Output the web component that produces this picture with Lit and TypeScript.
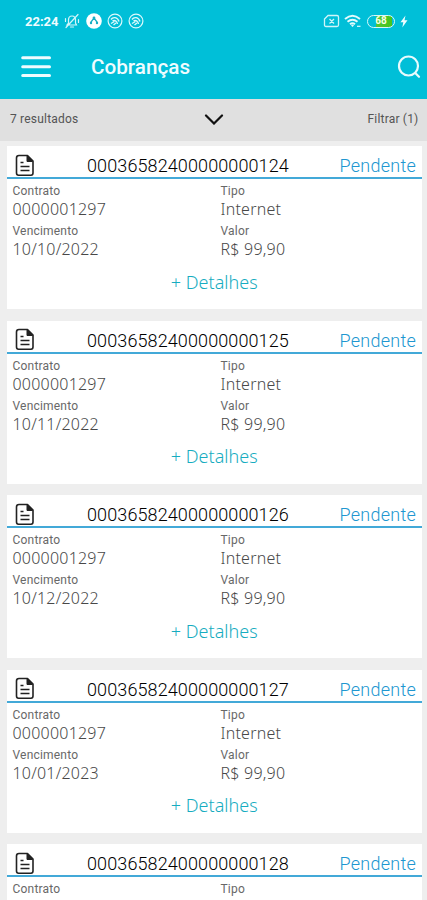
import { LitElement, html, css, svg } from "lit";
import { customElement, property } from "lit/decorators.js";

interface Charge {
  code: string;
  due: string;
}

const charges: Charge[] = [
  { code: "00036582400000000124", due: "10/10/2022" },
  { code: "00036582400000000125", due: "10/11/2022" },
  { code: "00036582400000000126", due: "10/12/2022" },
  { code: "00036582400000000127", due: "10/01/2023" },
  { code: "00036582400000000128", due: "10/02/2023" },
];

const swirl = svg`<circle cx="8" cy="8" r="6.9" stroke-width="1.2"/><path d="M4 6.500C6 3.500 10.500 4 12 8.500M5.500 8C7.500 6.500 10 8 10.500 11M4 10.500L7.500 8.500M6.500 12L9 10" stroke-width="1.400"/>`;

@customElement("charge-card")
export class ChargeCard extends LitElement {
  @property({ attribute: false }) charge!: Charge;

  static styles = css`
    :host {
      display: block;
      flex: none;
      box-sizing: border-box;
      height: 163px;
      background: #fff;
      font-family: Roboto, sans-serif;
      color: #585858;
      white-space: nowrap;
    }
    .head {
      display: grid;
      grid-template-columns: 80.5px 1fr auto;
      align-items: center;
      box-sizing: border-box;
      height: 33px;
      padding: 6px 6px 0 0;
      border-bottom: 2px solid #43a9d8;
      font-size: 18px;
      line-height: 25px;
    }
    .doc {
      display: block;
      width: 20px;
      height: 23px;
      margin-left: 8px;
    }
    .code {
      margin-top: 1px;
      color: #000;
      font-weight: 300;
      letter-spacing: 0.11px;
    }
    .state {
      margin-top: 1px;
      color: #2096d0;
      font-weight: 300;
      letter-spacing: 0.25px;
    }
    .fields {
      display: grid;
      grid-template-columns: 208px 1fr;
      padding: 4px 0 0 6px;
    }
    .field {
      height: 40px;
    }
    .label {
      font-size: 12px;
      line-height: 17px;
      letter-spacing: 0.2px;
      color: #686868;
    }
    .value {
      font-family: "Noto Sans", sans-serif;
      font-weight: 300;
      font-size: 16px;
      line-height: 19px;
      letter-spacing: 0.22px;
      color: #484848;
    }
    .more {
      font-family: "Noto Sans", sans-serif;
      font-weight: 300;
      font-size: 18px;
      line-height: 24px;
      margin-top: 6.500px;
      text-align: center;
      color: #16acc0;
    }
  `;

  render() {
    const c = this.charge;
    const fields = [
      ["Contrato", "0000001297"],
      ["Tipo", "Internet"],
      ["Vencimento", c.due],
      ["Valor", "R$ 99,90"],
    ];
    return html`
      <div class="head">
        <svg class="doc" viewBox="0 0 20 23" fill="none" stroke="#222" stroke-width="1.600" stroke-linejoin="round">
          <path d="M4 1.500H12.500L18 7V19Q18 21.200 16 21.200H3.500Q1.500 21.200 1.500 19V4Q1.500 1.500 4 1.500Z" />
          <path d="M12 2V7.500H17.500Z" fill="#222" stroke-width="1" />
          <path d="M5.500 8.500H8.500M5.500 12.500H14.500M5.500 16.500H14.500" stroke-width="1.400" />
        </svg>
        <span class="code">${c.code}</span>
        <span class="state">Pendente</span>
      </div>
      <div class="fields">
        ${fields.map(
          ([label, value]) => html`<div class="field">
            <div class="label">${label}</div>
            <div class="value">${value}</div>
          </div>`
        )}
      </div>
      <div class="more">+ Detalhes</div>
    `;
  }
}

@customElement("app-root")
export class AppRoot extends LitElement {
  static styles = css`
    :host {
      display: flex;
      flex-direction: column;
      width: 427px;
      height: 900px;
      overflow: hidden;
      background: #eee;
      font-family: Roboto, sans-serif;
      white-space: nowrap;
    }
    svg {
      display: block;
      flex: none;
    }
    .top {
      flex: none;
      height: 99px;
      background: #00bfd8;
      color: #effcff;
    }
    .status {
      display: flex;
      align-items: center;
      justify-content: space-between;
      height: 42px;
      padding: 0 19.500px 0 25px;
    }
    .group {
      display: flex;
      align-items: center;
    }
    .time {
      font-size: 13px;
      font-weight: 700;
      width: 39px;
    }
    .left {
      gap: 5.300px;
    }
    .left .time {
      margin-right: -5px;
    }
    .right {
      gap: 4.600px;
    }
    .battery {
      display: flex;
      align-items: center;
      justify-content: center;
      box-sizing: border-box;
      width: 28px;
      height: 13px;
      border: 1.5px solid #d8f8fb;
      border-radius: 7px;
      background: linear-gradient(90deg, transparent 30%, #55c636 30%, #45c51c 92%, transparent 92%);
      font-size: 10px;
      font-weight: 700;
      line-height: 10px;
      color: #f6ffe8;
    }
    .bar {
      display: flex;
      align-items: center;
      height: 50px;
      padding: 0 6.500px 0 21px;
    }
    .title {
      flex: 1;
      margin: 0 0 0 40px;
      font-size: 20.700px;
      font-weight: 500;
      line-height: 30px;
    }
    .filter {
      display: grid;
      grid-template-columns: 1fr auto 1fr;
      align-items: center;
      flex: none;
      height: 42px;
      box-sizing: border-box;
      padding: 0 8.500px 2px 10px;
      background: #e0e0e0;
      font-size: 12px;
      letter-spacing: 0.2px;
      color: #545454;
    }
    .filter .end {
      text-align: right;
    }
    .list {
      display: flex;
      flex-direction: column;
      gap: 11.6px;
      padding: 5px 5px 0 6.5px;
    }
  `;

  render() {
    return html`
      <div class="top">
        <div class="status">
          <div class="group left">
            <span class="time">22:24</span>
            <svg width="16" height="16" viewBox="0 0 16 16" fill="none" stroke="#d5f6fa" stroke-width="1.200" stroke-linecap="round">
              <path d="M3 12H12.500L11.500 10V7Q11.500 3 8 3Q4.500 3 4.500 7V10ZM6.500 14H9.500M14 1.500L2 14.500M1.500 5.500V8.500M14.500 6.500V9.500" />
            </svg>
            <svg width="16" height="16" viewBox="0 0 16 16">
              <circle cx="8" cy="8" r="7.800" fill="#fff" />
              <path d="M5 10.500V9L8 5L11 9V10.500" fill="none" stroke="#16aec5" stroke-width="1.300" />
              <circle cx="8" cy="5" r="1.400" fill="#16aec5" />
              <circle cx="5" cy="10" r="1.200" fill="#16aec5" />
              <circle cx="11" cy="10" r="1.200" fill="#16aec5" />
            </svg>
            <svg width="16" height="16" viewBox="0 0 16 16" fill="none" stroke="#dcf9fc">${swirl}</svg>
            <svg width="16" height="16" viewBox="0 0 16 16" fill="none" stroke="#dcf9fc">${swirl}</svg>
          </div>
          <div class="group right">
            <svg width="17" height="14" viewBox="0 0 17 14" fill="none" stroke="#d0f5f9" stroke-width="1.300">
              <path d="M5 1.500H14Q15.500 1.500 15.500 3V11Q15.500 12.500 14 12.500H3Q1.500 12.500 1.500 11V5ZM6.500 5L11 9.500M11 5L6.500 9.500" />
            </svg>
            <svg width="18" height="14" viewBox="0 0 18 14" fill="none" stroke="#e4fbfd" stroke-width="1.900">
              <path d="M1 5Q8.500-1.500 16 5M3.500 7.800Q8.500 3.500 13.500 7.800M6 10.300Q8.500 8.200 11 10.300" />
              <path d="M8.500 10.500L10 11.500L8.500 13L7 11.500Z" fill="#e4fbfd" stroke="none" />
              <path d="M13 12.300H16.500" stroke-width="1.200" />
            </svg>
            <div class="battery">68</div>
            <svg width="8" height="13" viewBox="0 0 8 13"><path d="M5.500 0.500L0.500 7.300H3.300L2.300 12.500L7.500 5.300H4.500Z" fill="#effdff" /></svg>
          </div>
        </div>
        <div class="bar">
          <svg width="30" height="24" viewBox="0 0 30 24" stroke="#effcff" stroke-width="3" stroke-linecap="round">
            <path d="M1.700 2.700H28.500M1.700 11.700H28.500M1.700 20.500H28.500" />
          </svg>
          <span class="title">Cobranças</span>
          <svg width="24" height="25" viewBox="0 0 24 25" fill="none" stroke="#e8fbfd" stroke-width="2.200" stroke-linecap="round">
            <circle cx="11.500" cy="11" r="9.500" />
            <path d="M18.500 18.300L22 21.800" />
          </svg>
        </div>
      </div>
      <div class="filter">
        <span>7 resultados</span>
        <svg width="20" height="12" viewBox="0 0 20 12" fill="none" stroke="#111" stroke-width="2.200" stroke-linecap="round">
          <path d="M2 2.500L10 10.500L18 2.500" />
        </svg>
        <span class="end">Filtrar (1)</span>
      </div>
      <div class="list">
        ${charges.map((c) => html`<charge-card .charge=${c}></charge-card>`)}
      </div>
    `;
  }
}
